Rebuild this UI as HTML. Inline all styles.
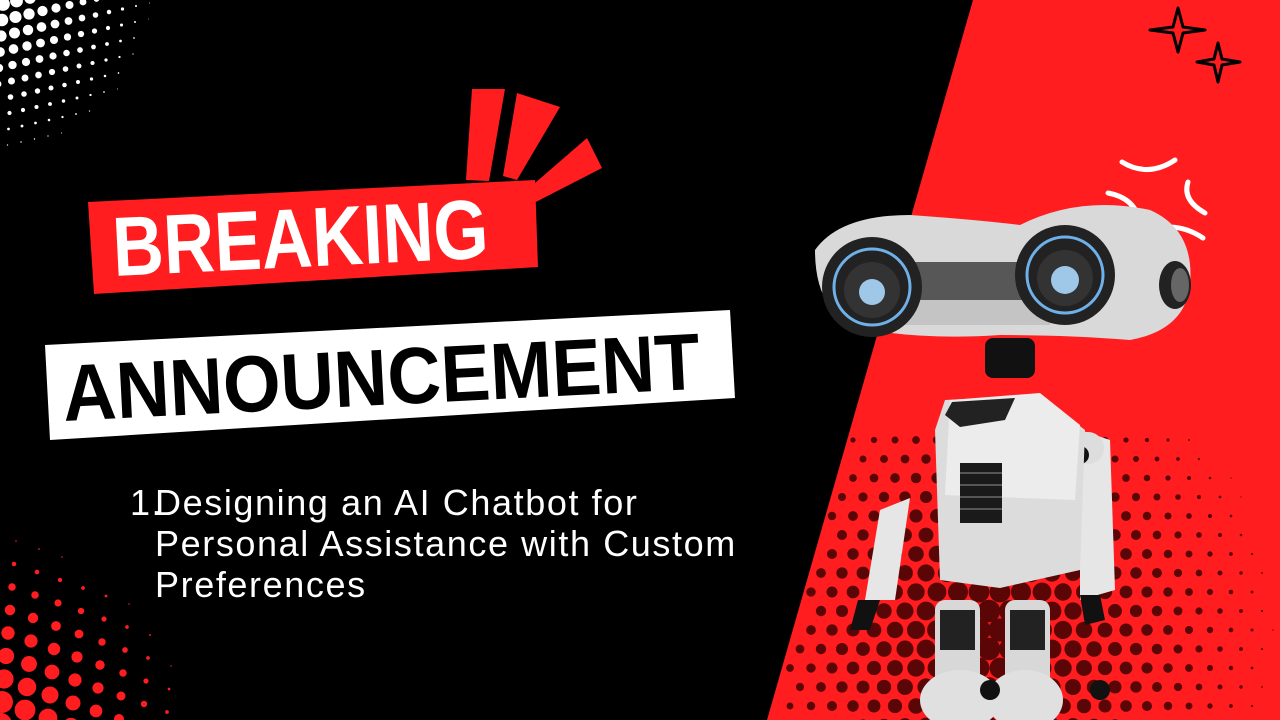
<!DOCTYPE html>
<html><head><meta charset="utf-8"><style>
html,body{margin:0;padding:0;background:#000;}
#c{position:relative;width:1280px;height:720px;overflow:hidden;background:#000;font-family:"Liberation Sans",sans-serif;}
svg{position:absolute;left:0;top:0}
.t{position:absolute;color:#fff;font-size:36px;line-height:41px;left:130px;top:482px;font-weight:300;letter-spacing:1.5px}
</style></head><body><div id="c">
<svg id="s" width="1280" height="720" viewBox="0 0 1280 720">
<polygon points="973,0 1280,0 1280,720 767,720" fill="#ff1d1f"/>
<g id="wd" fill="#fff"></g>
<g id="rd" fill="#ff1d1f"></g>
<g id="dd" fill="#5a0606"></g>
<polygon points="472,89 505,89 489,181 466,180" fill="#ff1d1f"/>
<polygon points="517,93 560,107 517,180 503,176" fill="#ff1d1f"/>
<polygon points="587,138 602,168 528,206 520,196" fill="#ff1d1f"/>
<polygon points="88,202 535,180 538,267 94,294" fill="#ff1d1f"/>
<text x="114" y="276" transform="rotate(-2.8 114 276)" font-family="Liberation Sans" font-weight="bold" font-size="84" fill="#fff" textLength="376" lengthAdjust="spacingAndGlyphs">BREAKING</text>
<polygon points="45,345 730,310 735,398 50,440" fill="#fff"/>
<text x="64" y="421" transform="rotate(-2.9 64 421)" font-family="Liberation Sans" font-weight="bold" font-size="80" fill="#000" textLength="638" lengthAdjust="spacingAndGlyphs">ANNOUNCEMENT</text>
<path d="M1178,8 L1183,27 L1205,30 L1183,33 L1178,52 L1173,33 L1150,30 L1173,27 Z" fill="none" stroke="#000" stroke-width="3" stroke-linejoin="round"/>
<path d="M1218,43 L1222,59 L1240,62 L1222,65 L1218,82 L1214,65 L1197,62 L1214,59 Z" fill="none" stroke="#000" stroke-width="3" stroke-linejoin="round"/>
<g fill="none" stroke="#fff" stroke-width="5" stroke-linecap="round">
<path d="M1122,162 Q1148,178 1175,160"/>
<path d="M1108,193 Q1135,198 1140,222"/>
<path d="M1188,182 Q1182,200 1205,213"/>
<path d="M1160,228 Q1182,224 1203,238"/>
</g>
<g>
<rect x="935" y="600" width="45" height="120" rx="10" fill="#d8d8d8"/>
<rect x="1005" y="600" width="45" height="120" rx="10" fill="#d8d8d8"/>
<rect x="940" y="610" width="35" height="40" fill="#222"/>
<rect x="1010" y="610" width="35" height="40" fill="#222"/>
<ellipse cx="960" cy="700" rx="40" ry="30" fill="#e0e0e0"/>
<ellipse cx="1025" cy="700" rx="38" ry="30" fill="#e0e0e0"/>
<circle cx="990" cy="690" r="10" fill="#111"/><circle cx="1100" cy="690" r="10" fill="#111"/>
<path d="M880,510 L910,498 L895,600 L865,600 Z" fill="#e6e6e6"/>
<path d="M1080,430 L1110,440 L1115,590 L1080,600 Z" fill="#e6e6e6"/>
<circle cx="1088" cy="448" r="16" fill="#ddd"/><circle cx="1080" cy="455" r="9" fill="#111"/>
<path d="M858,600 L880,600 L870,630 L850,630 Z" fill="#111"/>
<path d="M1080,595 L1100,595 L1105,620 L1085,625 Z" fill="#111"/>
<path d="M945,400 L1040,395 L1085,430 L1080,570 L1000,588 L940,580 L935,430 Z" fill="#dcdcdc"/>
<path d="M950,400 L1040,393 L1080,425 L1075,500 L945,495 Z" fill="#ececec"/>
<path d="M952,297 L1015,293 L1005,315 L960,322 L945,310 Z" transform="translate(0,105)" fill="#222"/>
<rect x="960" y="463" width="42" height="60" fill="#1a1a1a"/>
<g stroke="#555" stroke-width="2"><line x1="960" y1="473" x2="1002" y2="473"/><line x1="960" y1="485" x2="1002" y2="485"/><line x1="960" y1="497" x2="1002" y2="497"/><line x1="960" y1="509" x2="1002" y2="509"/></g>
<rect x="985" y="338" width="50" height="40" rx="8" fill="#111"/>
<path d="M815,250 Q840,215 910,215 Q980,220 1020,225 Q1080,195 1150,210 Q1195,230 1190,285 Q1185,330 1130,340 Q1070,335 1000,335 Q930,340 870,330 Q815,320 815,250 Z" fill="#d9d9d9"/>
<path d="M900,300 L1050,300 L1050,325 L900,325 Z" fill="#c4c4c4"/>
<rect x="900" y="262" width="150" height="38" fill="#575757"/>
<circle cx="872" cy="287" r="50" fill="#222"/>
<circle cx="872" cy="287" r="38" fill="none" stroke="#6fb0e8" stroke-width="3"/>
<circle cx="872" cy="290" r="28" fill="#333"/>
<circle cx="872" cy="292" r="13" fill="#9ec7e8"/>
<circle cx="1065" cy="275" r="50" fill="#222"/>
<circle cx="1065" cy="275" r="38" fill="none" stroke="#6fb0e8" stroke-width="3"/>
<circle cx="1065" cy="278" r="28" fill="#333"/>
<circle cx="1065" cy="280" r="14" fill="#9ec7e8"/>
<ellipse cx="1175" cy="285" rx="16" ry="24" fill="#222"/>
<ellipse cx="1180" cy="285" rx="9" ry="17" fill="#666"/>
</g>
</svg>
<div class="t">1.<span style="position:absolute;left:25px;white-space:nowrap;letter-spacing:1.6px">Designing an AI Chatbot for<br>Personal Assistance with Custom<br>Preferences</span></div>
</div>
<script>
var ns="http://www.w3.org/2000/svg";
function dot(g,x,y,r){var c=document.createElementNS(ns,"circle");c.setAttribute("cx",x);c.setAttribute("cy",y);c.setAttribute("r",r);document.getElementById(g).appendChild(c);}
for(var i=-2;i<14;i++)for(var j=-2;j<12;j++){var x=i*13.5+j*-1,y=j*16+i*-3;var d=Math.hypot(x+10,y+10);var r=7.5-d*0.045;if(r>0.4&&x>-8&&y>-8)dot("wd",x+3,y+4,r);}
for(var i=-2;i<14;i++)for(var j=-2;j<12;j++){var x=i*23+j*2,y=725-j*23+i*8;var d=Math.hypot(x+30,725-y+30);var r=15-d*0.065;if(r>0.6&&y<735&&y>535)dot("rd",x,y,r);}
for(var i=0;i<24;i++)for(var j=0;j<16;j++){var x=790+i*21+(j%2)*10,y=440+j*19;var d=Math.hypot(x-990,y-630);var r=12-d*0.04;var lx=973-(206*y/720);if(r>0.6&&x>lx+5)dot("dd",x,y,r);}
</script>
</body></html>
